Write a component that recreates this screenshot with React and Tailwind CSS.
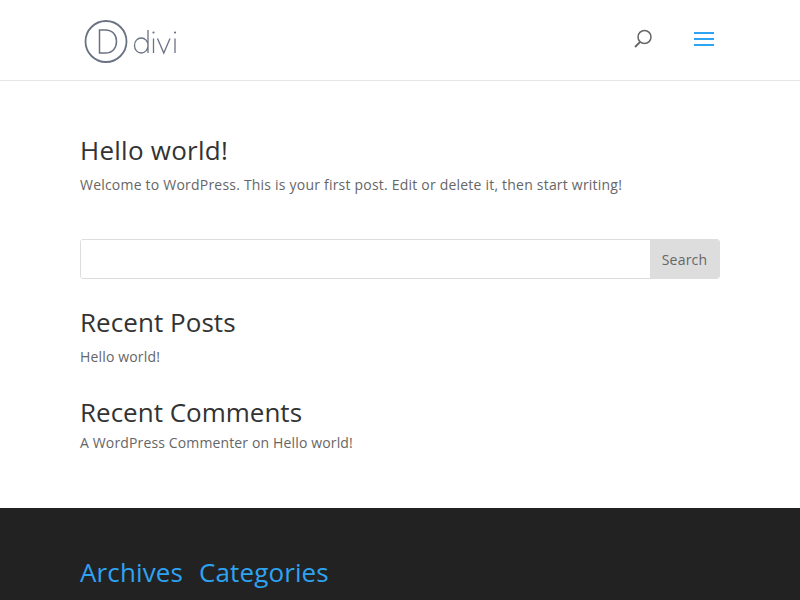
const Logo = () => (
  <svg width="94" height="44" viewBox="0 0 94 44" fill="none" stroke="#6b7283">
    <circle cx="22" cy="22.500" r="20.500" strokeWidth="1.800" />
    <path d="M15.500 11h6c7 0 11 5 11 11.500s-4 11.500-11 11.500h-6z" strokeWidth="1.500" />
    <path d="M64 11v23M64 26.500c0-4.200-3-7.500-6.800-7.500s-6.700 3.300-6.700 7.500 3 7.500 6.700 7.500 6.800-3.300 6.800-7.500z" strokeWidth="1.300" />
    <path d="M69.500 19.500v14.500M73.500 19.500l6.300 14.500 6.200-14.500M91 19.500v14.500" strokeWidth="1.300" />
    <circle cx="69.500" cy="13.500" r="1.100" fill="#6b7283" stroke="none" />
    <circle cx="91" cy="13.500" r="1.100" fill="#6b7283" stroke="none" />
  </svg>
);

const App = () => {
  return (
    <div className="h-[600px] overflow-hidden bg-white font-['Open_Sans',sans-serif] text-[14px] text-[#666]">
      <header className="h-[81px] border-b border-[#e6e6e6] bg-white">
        <div className="mx-[80px] flex h-[80px] items-center justify-between">
          <div className="pl-[4px] pt-[1px]"><Logo /></div>
          <div className="flex items-center gap-[41px] pr-[6px] pb-[2px]">
            <svg width="20" height="20" viewBox="0 0 20 20" fill="none" stroke="#666" strokeWidth="1.500">
              <circle cx="11.500" cy="8" r="6.500" />
              <path d="M7 13l-5 5" strokeWidth="1.800" />
            </svg>
            <div className="flex w-[20px] flex-col gap-[4px]">
              <div className="h-[2px] bg-[#2ea3f2]" />
              <div className="h-[2px] bg-[#2ea3f2]" />
              <div className="h-[2px] bg-[#2ea3f2]" />
            </div>
          </div>
        </div>
      </header>

      <main className="mx-[80px] h-[427px] pt-[50px]">
        <h1 className="text-[26px] leading-[39px] tracking-[0.25px] text-[#333]">Hello world!</h1>
        <p className="mt-[2px] leading-[26px] tracking-[0.21px]">Welcome to WordPress. This is your first post. Edit or delete it, then start writing!</p>

        <div className="mt-[41px] flex h-[40px] overflow-hidden rounded-[3px] border border-[#ddd]">
          <div className="flex-1 bg-white" />
          <button className="w-[69px] bg-[#ddd] text-[14px] tracking-[0.2px] text-[#666]">Search</button>
        </div>

        <h2 className="mt-[24px] text-[26px] leading-[39px] tracking-[0.05px] text-[#333]">Recent Posts</h2>
        <p className="mt-[2px] leading-[26px] tracking-[0.16px]">Hello world!</p>

        <h2 className="mt-[23px] text-[26px] leading-[39px] text-[#333]">Recent Comments</h2>
        <p className="mt-[-2px] leading-[26px] tracking-[0.14px]">A WordPress Commenter on Hello world!</p>
      </main>

      <footer className="h-[92px] bg-[#222] px-[80px] pt-[45px]">
        <div className="flex gap-[16px] text-[26px] leading-[39px] tracking-[0.12px] text-[#2ea3f2]">
          <span>Archives</span>
          <span>Categories</span>
        </div>
      </footer>
    </div>
  );
};

export default App;
